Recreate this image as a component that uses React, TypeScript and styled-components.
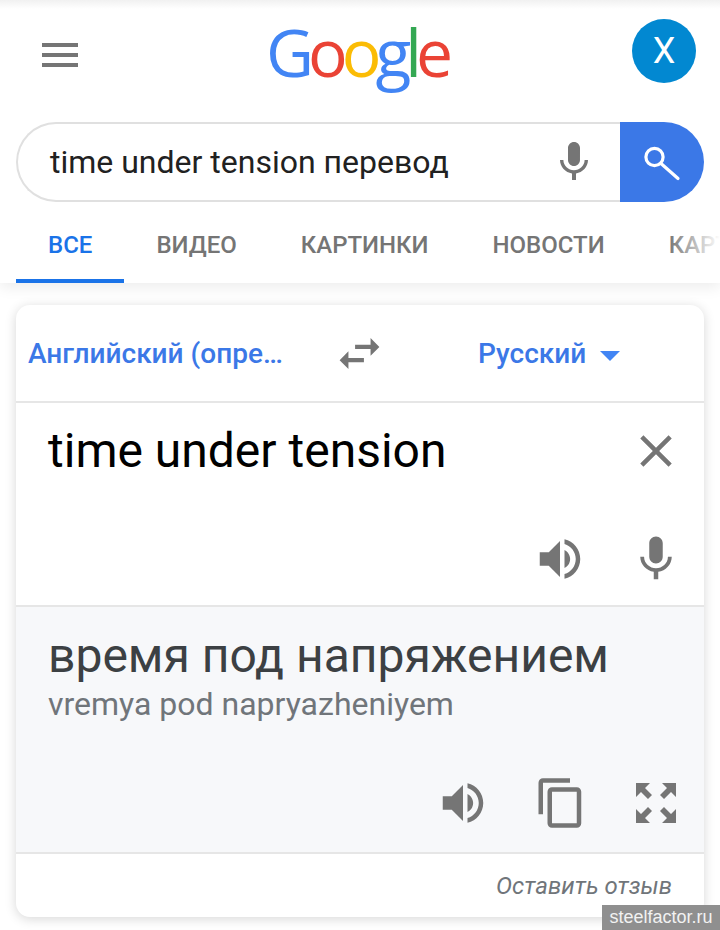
import React from 'react'
import styled, { createGlobalStyle } from 'styled-components'

const GlobalStyle = createGlobalStyle`
  html, body {
    margin: 0;
    padding: 0;
    background: #fff;
  }
  body {
    font-family: Roboto, "Noto Sans", sans-serif;
  }
`

const ICONS = {
  mic: 'M12 14c1.66 0 2.99-1.34 2.99-3L15 5c0-1.66-1.34-3-3-3S9 3.34 9 5v6c0 1.66 1.34 3 3 3zm5.3-3c0 3-2.54 5.1-5.3 5.1S6.7 14 6.7 11H5c0 3.41 2.72 6.23 6 6.72V21h2v-3.28c3.28-.48 6-3.3 6-6.72h-1.7z',
  close: 'M19 6.41L17.59 5 12 10.59 6.41 5 5 6.41 10.59 12 5 17.59 6.41 19 12 13.41 17.59 19 19 17.59 13.41 12z',
  volume: 'M3 9v6h4l5 5V4L7 9H3zm13.5 3c0-1.77-1.02-3.29-2.5-4.03v8.05c1.48-.73 2.5-2.25 2.5-4.02zM14 3.23v2.06c2.89.86 5 3.54 5 6.71s-2.11 5.85-5 6.71v2.06c4.01-.91 7-4.49 7-8.77s-2.99-7.86-7-8.77z',
  copy: 'M16 1H4c-1.1 0-2 .9-2 2v14h2V3h12V1zm3 4H8c-1.1 0-2 .9-2 2v14c0 1.1.9 2 2 2h11c1.1 0 2-.9 2-2V7c0-1.1-.9-2-2-2zm0 16H8V7h11v14z',
  swap: 'M6.99 11L3 15l3.99 4v-3H14v-2H6.99v-3zM21 9l-3.99-4v3H10v2h7.01v3L21 9z',
}

interface IconProps {
  name: keyof typeof ICONS
  size?: number
}

const Icon: React.FC<IconProps> = ({ name, size = 54 }) => (
  <svg width={size} height={size} viewBox="0 0 24 24" fill="#757575">
    <path d={ICONS[name]} />
  </svg>
)

const SearchIcon = () => (
  <svg width="48" height="48" viewBox="0 0 48 48" fill="none" stroke="#fff" strokeWidth="3.2">
    <circle cx="16.5" cy="19" r="8.6" />
    <path d="M23 25.5L40 40.5" strokeLinecap="round" />
  </svg>
)

const ExpandIcon = () => (
  <svg width="40" height="40" viewBox="0 0 40 40" fill="#757575">
    <path d="M0 0H14L9 5L16 12L12 16L5 9L0 14Z" />
    <path d="M40 0H26L31 5L24 12L28 16L35 9L40 14Z" />
    <path d="M0 40H14L9 35L16 28L12 24L5 31L0 26Z" />
    <path d="M40 40H26L31 35L24 28L28 24L35 31L40 26Z" />
  </svg>
)

const LOGO_LETTERS: [string, string][] = [
  ['G', '#4285f4'],
  ['o', '#ea4335'],
  ['o', '#fbbc05'],
  ['g', '#4285f4'],
  ['l', '#34a853'],
  ['e', '#ea4335'],
]

const TABS = ['ВСЕ', 'ВИДЕО', 'КАРТИНКИ', 'НОВОСТИ', 'КАРТЫ']

const App: React.FC = () => (
  <Page>
    <GlobalStyle />
    <Header>
      <TopRow>
        <MenuButton>
          <MenuBar />
          <MenuBar />
          <MenuBar />
        </MenuButton>
        <Logo>
          {LOGO_LETTERS.map(([letter, color], i) => (
            <LogoLetter key={i} $color={color}>
              {letter}
            </LogoLetter>
          ))}
        </Logo>
        <Avatar>X</Avatar>
      </TopRow>
      <SearchBox>
        <SearchField>
          <SearchText>time under tension перевод</SearchText>
          <Icon name="mic" size={48} />
        </SearchField>
        <SearchButton>
          <SearchIcon />
        </SearchButton>
      </SearchBox>
      <Tabs>
        {TABS.map((tab, i) => (
          <Tab key={tab} $active={i === 0}>
            {tab}
          </Tab>
        ))}
        <TabsFade />
      </Tabs>
    </Header>
    <Card>
      <LangBar>
        <SourceLang>Английский (определить язык)</SourceLang>
        <SwapButton>
          <Icon name="swap" size={53} />
        </SwapButton>
        <TargetLang>
          Русский
          <Caret />
        </TargetLang>
      </LangBar>
      <InputPane>
        <InputRow>
          <InputText>time under tension</InputText>
          <Icon name="close" />
        </InputRow>
        <ActionRow>
          <Icon name="volume" />
          <Icon name="mic" />
        </ActionRow>
      </InputPane>
      <ResultPane>
        <ResultText>время под напряжением</ResultText>
        <Translit>vremya pod napryazheniyem</Translit>
        <ResultActions>
          <Icon name="volume" />
          <Icon name="copy" />
          <ExpandSlot>
            <ExpandIcon />
          </ExpandSlot>
        </ResultActions>
      </ResultPane>
      <Footer>
        <FeedbackLink>Оставить отзыв</FeedbackLink>
      </Footer>
    </Card>
    <Watermark>steelfactor.ru</Watermark>
  </Page>
)

const Page = styled.div`
  position: relative;
  width: 720px;
  height: 930px;
  overflow: hidden;
  background: #fff;
`

const Header = styled.header`
  background: linear-gradient(#f1f1f1 0, #fff 9px);
  box-shadow: 0 4px 14px rgba(0, 0, 0, 0.08);
`

const TopRow = styled.div`
  display: grid;
  grid-template-columns: 200px 232px 1fr;
  height: 122px;
  padding-left: 42px;
  padding-right: 24px;
  box-sizing: border-box;
`

const MenuButton = styled.div`
  display: flex;
  flex-direction: column;
  gap: 6px;
  width: 36px;
  padding-top: 43px;
`

const MenuBar = styled.span`
  display: block;
  height: 4px;
  background: #757575;
`

const Logo = styled.div`
  display: flex;
  justify-content: center;
  height: 90px;
  padding-top: 12px;
  padding-right: 3px;
  box-sizing: border-box;
  font-family: "Open Sans", sans-serif;
  font-size: 66px;
  font-weight: 500;
  line-height: 78px;
  letter-spacing: -6px;
`

const LogoLetter = styled.span<{ $color: string }>`
  color: ${props => props.$color};
`

const Avatar = styled.div`
  justify-self: end;
  width: 64px;
  height: 64px;
  margin-top: 19px;
  border-radius: 50%;
  background: #0288d1;
  color: #fff;
  font-size: 36px;
  line-height: 64px;
  text-align: center;
`

const SearchBox = styled.div`
  display: flex;
  height: 80px;
  margin: 0 16px;
`

const SearchField = styled.div`
  display: flex;
  flex: 1;
  align-items: center;
  padding: 0 22px 0 32px;
  box-sizing: border-box;
  border: 2px solid #e0e0e0;
  border-right: none;
  border-radius: 40px 0 0 40px;
  background: #fff;
`

const SearchText = styled.div`
  flex: 1;
  color: #212121;
  font-size: 32px;
`

const SearchButton = styled.div`
  display: flex;
  align-items: center;
  justify-content: center;
  width: 84px;
  border-radius: 0 40px 40px 0;
  background: #3b78e7;
`

const Tabs = styled.nav`
  position: relative;
  display: flex;
  height: 81px;
  padding-left: 16px;
  overflow: hidden;
`

const Tab = styled.div<{ $active: boolean }>`
  flex: none;
  padding: 29px 32px 0;
  box-sizing: border-box;
  border-bottom: 4px solid ${props => (props.$active ? '#1a73e8' : 'transparent')};
  color: ${props => (props.$active ? '#1a73e8' : '#757575')};
  font-size: 24px;
  font-weight: 500;
  line-height: 28px;
`

const TabsFade = styled.div`
  position: absolute;
  top: 0;
  right: 0;
  bottom: 0;
  width: 52px;
  background: linear-gradient(to right, rgba(255, 255, 255, 0), #fff);
`

const Card = styled.main`
  display: flex;
  flex-direction: column;
  height: 612px;
  margin: 22px 16px 0;
  border-radius: 14px;
  overflow: hidden;
  background: #fff;
  box-shadow: 0 2px 12px rgba(0, 0, 0, 0.16);
`

const LangBar = styled.div`
  display: flex;
  align-items: center;
  flex: none;
  height: 96px;
  padding-left: 12px;
  box-sizing: border-box;
  color: #3b78e7;
  font-size: 28px;
  font-weight: 500;
`

const SourceLang = styled.div`
  width: 256px;
  overflow: hidden;
  white-space: nowrap;
  text-overflow: ellipsis;
`

const SwapButton = styled.div`
  display: flex;
  margin-left: 49px;
`

const TargetLang = styled.div`
  display: flex;
  align-items: center;
  margin-left: 92px;
`

const Caret = styled.span`
  width: 0;
  height: 0;
  margin-left: 14px;
  margin-top: 5px;
  border-left: 10.5px solid transparent;
  border-right: 10.5px solid transparent;
  border-top: 10px solid #4285f4;
`

const InputPane = styled.section`
  display: flex;
  flex-direction: column;
  flex: none;
  height: 206px;
  padding: 14px 21px 0 32px;
  box-sizing: border-box;
  border-top: 2px solid #e6e6e6;
  border-bottom: 2px solid #e6e6e6;
`

const InputRow = styled.div`
  display: flex;
  justify-content: space-between;
  align-items: center;
  height: 68px;
`

const InputText = styled.div`
  color: #000;
  font-size: 48px;
  line-height: 68px;
`

const ActionRow = styled.div`
  display: flex;
  justify-content: flex-end;
  gap: 42px;
  margin-top: 47px;
`

const ResultPane = styled.section`
  display: flex;
  flex-direction: column;
  flex: 1;
  padding: 21px 28px 0 32px;
  background: #f7f8fa;
`

const ResultText = styled.div`
  color: #3c4043;
  font-size: 48px;
  line-height: 56px;
`

const Translit = styled.div`
  color: #70757a;
  font-size: 32px;
  line-height: 40px;
`

const ResultActions = styled.div`
  display: flex;
  align-items: center;
  justify-content: flex-end;
  gap: 44px;
  margin-top: 52px;
`

const ExpandSlot = styled.div`
  display: flex;
  margin-left: 4px;
`

const Footer = styled.footer`
  display: flex;
  align-items: center;
  justify-content: flex-end;
  flex: none;
  height: 65px;
  padding-right: 32px;
  box-sizing: border-box;
  border-top: 2px solid #e6e6e6;
`

const FeedbackLink = styled.span`
  color: #70757a;
  font-size: 24px;
  font-style: italic;
`

const Watermark = styled.div`
  position: absolute;
  right: 0;
  bottom: 0;
  width: 118px;
  height: 25px;
  background: #8f8f8f;
  color: #f2f2f2;
  font-family: "Liberation Sans", Arial, sans-serif;
  font-size: 18px;
  line-height: 25px;
  text-align: center;
`

export default App
